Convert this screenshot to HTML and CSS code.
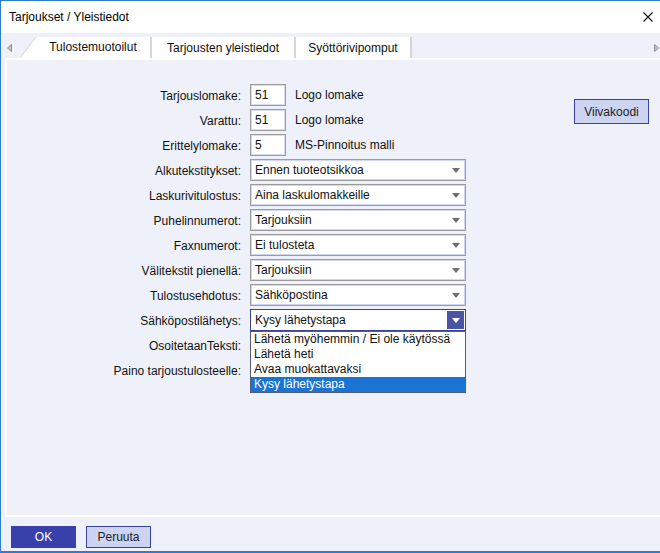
FILE: index.html
```html
<!DOCTYPE html>
<html lang="fi">
<head>
    <meta charset="UTF-8">
    <title>Tarjoukset / Yleistiedot</title>
    <link rel="stylesheet" href="styles.css">
</head>
<body>
    <div class="window">
        <div class="titlebar">
            <span class="title">Tarjoukset / Yleistiedot</span>
            <svg class="close" width="10" height="10" viewBox="0 0 10 10">
                <path d="M0.5 0.5 L9.5 9.5 M9.5 0.5 L0.5 9.5" stroke="#111" stroke-width="1.1" fill="none"/>
            </svg>
        </div>

        <div class="tabstrip">
            <div class="scroll-left">
                <svg width="5" height="8" viewBox="0 0 5 8">
                    <polygon points="4.5,0.5 0.5,4 4.5,7.5" fill="#c4c4c4" stroke="#8c8c8c" stroke-width="1"/>
                </svg>
            </div>
            <div class="tab tab-first">
                <svg class="tab-corner" width="16" height="21" viewBox="0 0 16 21">
                    <polygon points="16,0 16,21 0,21" fill="#fff"/>
                    <line x1="16" y1="0" x2="0" y2="21" stroke="#d4d4d4" stroke-width="1"/>
                </svg>
                <span class="tab-label">Tulostemuotoilut</span>
            </div>
            <div class="tab tab-second"><span class="tab-label">Tarjousten yleistiedot</span></div>
            <div class="tab tab-third"><span class="tab-label">Syöttörivipomput</span></div>
            <div class="scroll-right">
                <svg width="5" height="8" viewBox="0 0 5 8">
                    <polygon points="0.5,0.5 4.5,4 0.5,7.5" fill="#c4c4c4" stroke="#8c8c8c" stroke-width="1"/>
                </svg>
            </div>
        </div>

        <div class="panel">
            <div class="form">
                <label>Tarjouslomake:</label>
                <div class="field-row">
                    <div class="num-input">51</div>
                    <span class="note">Logo lomake</span>
                </div>

                <label>Varattu:</label>
                <div class="field-row">
                    <div class="num-input">51</div>
                    <span class="note">Logo lomake</span>
                </div>

                <label>Erittelylomake:</label>
                <div class="field-row">
                    <div class="num-input">5</div>
                    <span class="note">MS-Pinnoitus malli</span>
                </div>

                <label>Alkutekstitykset:</label>
                <div class="select"><span>Ennen tuoteotsikkoa</span><i class="arrow"></i></div>

                <label>Laskurivitulostus:</label>
                <div class="select"><span>Aina laskulomakkeille</span><i class="arrow"></i></div>

                <label>Puhelinnumerot:</label>
                <div class="select"><span>Tarjouksiin</span><i class="arrow"></i></div>

                <label>Faxnumerot:</label>
                <div class="select"><span>Ei tulosteta</span><i class="arrow"></i></div>

                <label>Välitekstit pienellä:</label>
                <div class="select"><span>Tarjouksiin</span><i class="arrow"></i></div>

                <label>Tulostusehdotus:</label>
                <div class="select"><span>Sähköpostina</span><i class="arrow"></i></div>

                <label>Sähköpostilähetys:</label>
                <div class="select select-open">
                    <span>Kysy lähetystapa</span>
                    <b class="drop-btn"><i class="arrow arrow-white"></i></b>
                    <ul class="dropdown">
                        <li>Lähetä myöhemmin / Ei ole käytössä</li>
                        <li>Lähetä heti</li>
                        <li>Avaa muokattavaksi</li>
                        <li class="selected">Kysy lähetystapa</li>
                    </ul>
                </div>

                <label>OsoitetaanTeksti:</label>
                <div></div>

                <label>Paino tarjoustulosteelle:</label>
                <div></div>
            </div>

            <button class="btn btn-light btn-barcode">Viivakoodi</button>
        </div>

        <div class="footer">
            <button class="btn btn-primary">OK</button>
            <button class="btn btn-light">Peruuta</button>
        </div>
    </div>
</body>
</html>
```

FILE: styles.css
```css
/* Windows style dialog */
* {
    margin: 0;
    padding: 0;
    box-sizing: border-box;
    font-family: 'Liberation Sans', Arial, sans-serif;
}

body {
    width: 660px;
    height: 553px;
    overflow: hidden;
    background: #eef1f9;
    color: #111;
    font-size: 12px;
}

.window {
    width: 660px;
    height: 553px;
    display: flex;
    flex-direction: column;
    background: #eef1f9;
    border-top: 1px solid #2f7bd3;
    border-left: 1px solid #2f7bd3;
    border-bottom: 2px solid #2f7bd3;
}

.titlebar {
    height: 32px;
    flex: none;
    display: flex;
    align-items: center;
    justify-content: space-between;
    padding: 0 7px 0 8px;
    background: #fff;
}

.title {
    font-size: 12px;
    color: #000;
}

.tabstrip {
    height: 25px;
    flex: none;
    display: flex;
    align-items: flex-end;
}

.scroll-left {
    width: 19px;
    height: 21px;
    display: flex;
    align-items: center;
    padding-left: 6px;
}

.scroll-right {
    margin-left: auto;
    height: 21px;
    display: flex;
    align-items: center;
    padding-right: 1px;
}

.tab {
    height: 21px;
    display: flex;
    align-items: center;
    background: #fff;
    border-right: 2px solid #d6d6d6;
    color: #111;
}

.tab-label {
    flex: 1;
    text-align: center;
}

.tab-first {
    width: 132px;
    background: none;
}

.tab-first .tab-label {
    height: 21px;
    line-height: 21px;
    background: #fff;
}

.tab-corner {
    flex: none;
}

.tab-second {
    width: 144px;
}

.tab-third {
    width: 116px;
}

.panel {
    flex: 1;
    display: flex;
    align-items: flex-start;
    margin-left: 4px;
    border-top: 2px solid #fff;
    border-left: 2px solid #fff;
    border-bottom: 2px solid #fff;
    padding-top: 24px;
}

.form {
    display: grid;
    grid-template-columns: 234px 216px;
    grid-auto-rows: 22px;
    column-gap: 9px;
    row-gap: 3px;
}

.form label {
    display: flex;
    align-items: center;
    justify-content: flex-end;
    padding-top: 1px;
}

.field-row {
    display: flex;
    align-items: center;
    gap: 9px;
}

.num-input {
    width: 36px;
    height: 22px;
    line-height: 20px;
    padding-left: 4px;
    background: #fff;
    border: 1px solid #9c9c9c;
    box-shadow: inset 0 0 0 1px #d9dcef;
}

.select {
    position: relative;
    height: 22px;
    display: flex;
    align-items: center;
    padding-left: 4px;
    background: #fff;
    border: 1px solid #9c9c9c;
    box-shadow: inset 0 0 0 1px #d2d6ee;
}

.arrow {
    position: absolute;
    right: 5px;
    top: 8px;
    width: 0;
    height: 0;
    border-left: 4px solid transparent;
    border-right: 4px solid transparent;
    border-top: 5px solid #6e6e6e;
}

.select-open {
    border-color: #3c4299;
    box-shadow: none;
}

.drop-btn {
    position: absolute;
    right: 1px;
    top: 1px;
    width: 17px;
    height: 18px;
    background: #4a53a4;
}

.arrow-white {
    right: 4px;
    top: 7px;
    border-top-color: #fff;
}

.dropdown {
    position: absolute;
    left: -1px;
    top: 21px;
    width: 216px;
    list-style: none;
    background: #fff;
    border: 1px solid #555a80;
    z-index: 2;
}

.dropdown li {
    height: 15px;
    line-height: 15px;
    padding-left: 3px;
    white-space: nowrap;
}

.dropdown li.selected {
    background: #1b73d3;
    color: #fff;
}

.btn {
    height: 22px;
    width: 65px;
    font-size: 12px;
    border: 1px solid #3a42a8;
    cursor: pointer;
}

.btn-primary {
    background: #3741a9;
    color: #fff;
}

.btn-light {
    background: #cdd4f1;
    color: #222;
}

.btn-barcode {
    width: 75px;
    height: 25px;
    margin: 15px 11px 0 auto;
}

.footer {
    height: 34px;
    flex: none;
    display: flex;
    gap: 10px;
    padding: 9px 0 0 10px;
}
```
